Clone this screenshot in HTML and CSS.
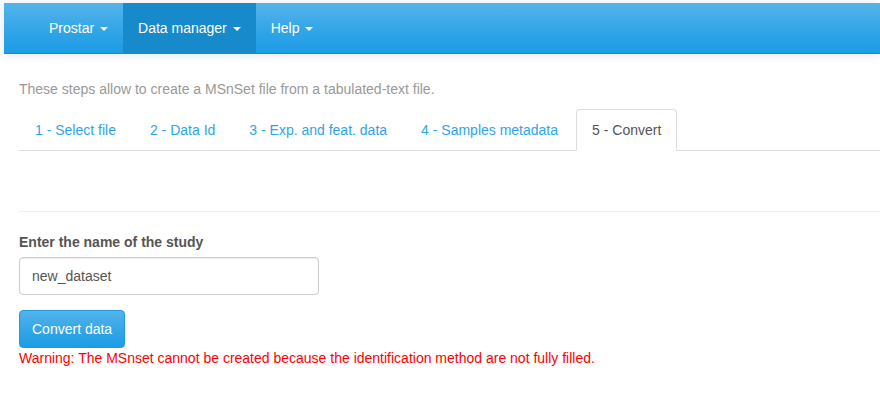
FILE: index.html
```html
<!DOCTYPE html>
<html lang="en">
<head>
  <meta charset="UTF-8">
  <meta name="viewport" content="width=device-width, initial-scale=1.0">
  <title>Prostar</title>
  <link rel="stylesheet" href="styles.css">
</head>
<body>
  <!-- Top navigation -->
  <nav class="navbar">
    <ul class="navbar-nav">
      <li><a href="#">Prostar <span class="caret"></span></a></li>
      <li class="active"><a href="#">Data manager <span class="caret"></span></a></li>
      <li><a href="#">Help <span class="caret"></span></a></li>
    </ul>
  </nav>

  <div class="container">
    <p class="intro">These steps allow to create a MSnSet file from a tabulated-text file.</p>

    <ul class="nav-tabs">
      <li><a href="#">1 - Select file</a></li>
      <li><a href="#">2 - Data Id</a></li>
      <li><a href="#">3 - Exp. and feat. data</a></li>
      <li><a href="#">4 - Samples metadata</a></li>
      <li class="active"><a href="#">5 - Convert</a></li>
    </ul>

    <div class="tab-content">
      <hr>
      <div class="form-group">
        <label for="studyName">Enter the name of the study</label>
        <input id="studyName" class="form-control" type="text" value="new_dataset">
      </div>
      <button class="btn btn-primary">Convert data</button>
      <div class="warning">Warning: The MSnset cannot be created because the identification method are not fully filled.</div>
    </div>
  </div>
</body>
</html>
```

FILE: styles.css
```css
body {
  margin: 0;
  padding: 3px 0 0 4px;
  font-family: "Liberation Sans", Arial, sans-serif;
  font-size: 14px;
  line-height: 20px;
  color: #555;
  background: #fff;
  overflow: hidden;
}

a {
  text-decoration: none;
}

/* Navbar */
.navbar {
  height: 50px;
  padding-left: 30px;
  background-image: linear-gradient(#54b4eb, #2fa4e7 60%, #1d9ce5);
  border-bottom: 1px solid #178acc;
  box-shadow: 0 1px 10px rgba(0, 0, 0, 0.1);
  margin-bottom: 25px;
}

.navbar-nav {
  display: flex;
  margin: 0;
  padding: 0;
  list-style: none;
}

.navbar-nav a {
  display: block;
  padding: 15px;
  color: #fff;
}

.navbar-nav .active a {
  background: #178acc;
}

.caret {
  display: inline-block;
  width: 0;
  height: 0;
  margin-left: 2px;
  vertical-align: middle;
  border-top: 4px solid #fff;
  border-left: 4px solid transparent;
  border-right: 4px solid transparent;
}

/* Content */
.container {
  padding-left: 15px;
}

.intro {
  margin: 0 0 10px;
  color: #999;
}

.nav-tabs {
  display: flex;
  margin: 0;
  padding: 0;
  list-style: none;
  border-bottom: 1px solid #ddd;
}

.nav-tabs li {
  margin-bottom: -1px;
}

.nav-tabs a {
  display: block;
  margin-right: 2px;
  padding: 10px 15px;
  color: #2fa4e7;
  border: 1px solid transparent;
  border-radius: 4px 4px 0 0;
}

.nav-tabs .active a {
  color: #555;
  background: #fff;
  border-color: #ddd #ddd transparent;
}

.tab-content {
  padding-top: 40px;
}

hr {
  margin: 20px 0;
  border: 0;
  border-top: 1px solid #eee;
}

.form-group {
  margin-bottom: 15px;
}

label {
  display: block;
  margin-bottom: 5px;
  font-weight: bold;
}

.form-control {
  box-sizing: border-box;
  width: 300px;
  height: 38px;
  padding: 8px 12px;
  font-family: inherit;
  font-size: 14px;
  color: #555;
  border: 1px solid #ccc;
  border-radius: 4px;
  box-shadow: inset 0 1px 1px rgba(0, 0, 0, 0.075);
}

.btn {
  display: block;
  height: 38px;
  padding: 8px 12px;
  font-family: inherit;
  font-size: 14px;
  line-height: 20px;
  border-radius: 4px;
  cursor: pointer;
}

.btn-primary {
  color: #fff;
  background-image: linear-gradient(#54b4eb, #2fa4e7 60%, #1d9ce5);
  border: 1px solid #1f9bde;
}

.warning {
  color: #f00;
}
```
